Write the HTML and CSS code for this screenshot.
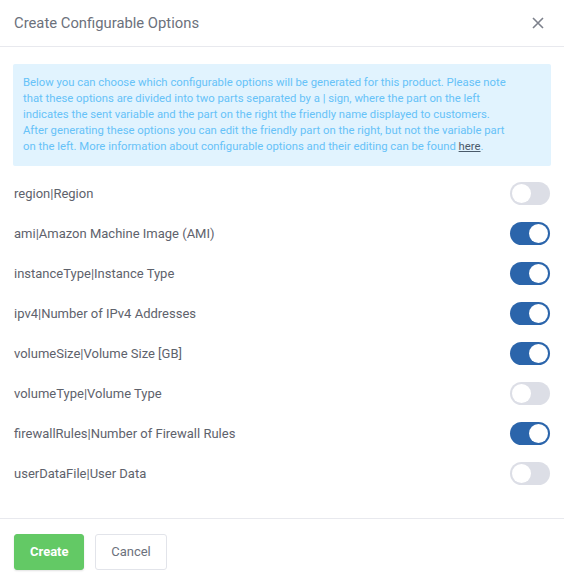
FILE: index.html
```html
<!DOCTYPE html>
<html>
<head>
<meta charset="utf-8">
<link rel="stylesheet" href="styles.css">
</head>
<body>
<div class="modal">
  <div class="modal-header">
    <h2 class="modal-title">Create Configurable Options</h2>
    <button class="close" aria-label="Close">
      <svg width="12" height="12" viewBox="0 0 12 12"><path d="M1 1L11 11M11 1L1 11" stroke="#7d818c" stroke-width="1.6" fill="none"/></svg>
    </button>
  </div>
  <div class="modal-body">
    <div class="alert">Below you can choose which configurable options will be generated for this product. Please note<br>that these options are divided into two parts separated by a | sign, where the part on the left<br>indicates the sent variable and the part on the right the friendly name displayed to customers.<br>After generating these options you can edit the friendly part on the right, but not the variable part<br>on the left. More information about configurable options and their editing can be found <a href="#">here</a>.</div>
    <div class="options">
      <div class="row"><span class="label">region|Region</span><span class="switch"></span></div>
      <div class="row"><span class="label">ami|Amazon Machine Image (AMI)</span><span class="switch on"></span></div>
      <div class="row"><span class="label">instanceType|Instance Type</span><span class="switch on"></span></div>
      <div class="row"><span class="label">ipv4|Number of IPv4 Addresses</span><span class="switch on"></span></div>
      <div class="row"><span class="label">volumeSize|Volume Size [GB]</span><span class="switch on"></span></div>
      <div class="row"><span class="label">volumeType|Volume Type</span><span class="switch"></span></div>
      <div class="row"><span class="label">firewallRules|Number of Firewall Rules</span><span class="switch on"></span></div>
      <div class="row"><span class="label">userDataFile|User Data</span><span class="switch"></span></div>
    </div>
  </div>
  <div class="modal-footer">
    <button class="btn btn-primary">Create</button>
    <button class="btn btn-default">Cancel</button>
  </div>
</div>
</body>
</html>
```
FILE: styles.css
```css
* { box-sizing: border-box; }
html, body { margin: 0; padding: 0; background: #fff; }
body { font-family: Roboto, "Noto Sans", sans-serif; width: 564px; height: 583px; }
.modal { width: 564px; height: 583px; display: flex; flex-direction: column; }
.modal-header { height: 47px; display: flex; align-items: center; justify-content: space-between; padding: 0 20px 0 14px; border-bottom: 1px solid #e8e9ee; }
.modal-title { margin: 0; font-size: 14.8px; font-weight: 400; color: #6c717c; }
.close { background: none; border: 0; padding: 0; width: 12px; height: 12px; display: flex; cursor: pointer; }
.modal-body { padding: 17px 13px 0 13px; flex: 1; }
.alert { background: #e1f3fe; color: #66c2f8; font-size: 11.3px; line-height: 16px; padding: 11px 4px 11px 10px; border-radius: 2px; white-space: nowrap; overflow: hidden; }
.alert a { color: #4a5a6a; text-decoration: underline; }
.options { margin-top: 7px; display: flex; flex-direction: column; }
.row { height: 40px; display: flex; align-items: center; justify-content: space-between; padding-left: 1px; }
.label { font-size: 13px; color: #5e626c; }
.switch { width: 40px; height: 23px; border-radius: 12px; background: #dcdee6; position: relative; margin-right: 1px; }
.switch::after { content: ""; position: absolute; top: 2px; left: 2px; width: 19px; height: 19px; border-radius: 50%; background: #fff; }
.switch.on { background: #2b65ab; }
.switch.on::after { left: 19px; }
.modal-footer { height: 65px; border-top: 1px solid #e8e9ee; display: flex; align-items: center; gap: 11px; padding: 1px 14px 0; }
.btn { height: 36px; font-family: Roboto, sans-serif; font-size: 13px; border-radius: 3px; padding: 0 15px; cursor: pointer; }
.btn-primary { background: #63c965; color: #fff; border: 1px solid #63c965; font-weight: 700; width: 70px; box-shadow: 0 1px 2px rgba(0,0,0,0.12); }
.btn-default { background: #fff; color: #6c717c; border: 1px solid #e2e4ea; width: 72px; }
```
